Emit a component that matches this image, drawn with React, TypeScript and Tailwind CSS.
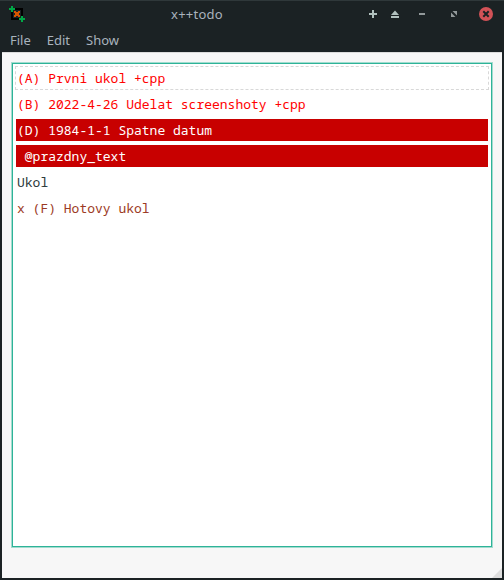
type Task = { text: string; look: string };

const tasks: Task[] = [
  { text: "(A) Prvni ukol +cpp", look: "text-[#ff0000]" },
  { text: "(B) 2022-4-26 Udelat screenshoty +cpp", look: "text-[#ff0000]" },
  { text: "(D) 1984-1-1 Spatne datum", look: "bg-[#c80000] text-white" },
  { text: " @prazdny_text", look: "bg-[#c80000] text-white" },
  { text: "Ukol", look: "text-[#2c3a3c]" },
  { text: "x (F) Hotovy ukol", look: "text-[#9c3a24]" },
];

function AppIcon() {
  return (
    <svg width="16" height="16" viewBox="0 0 16 16" shapeRendering="crispEdges">
      <path fill="#000" d="M2 2h12v12H2z" />
      <path fill="#1b2224" d="M4 4h8v8H4z" />
      <path fill="#d45500" d="M5 5h2v1h2V5h2v2h-1v2h1v2H9v-1H7v1H5V9h1V7H5z" />
      <path fill="#00a846" d="M2 0h2v2h2v2H4v2H2V4H0V2h2zM12 10h2v2h2v2h-2v2h-2v-2h-2v-2h2z" />
    </svg>
  );
}

function WindowButtons() {
  return (
    <svg width="128" height="16" viewBox="0 0 128 16">
      <path fill="#b1c1be" d="M6 4h2v3h3v2H8v3H6V9H3V7h3z" />
      <path fill="#b1c1be" d="M29 4.500l4 4.500h-8zM25 10h8v2h-8z" />
      <path fill="#92999a" d="M53 7h6v2h-6z" />
      <path fill="#92999a" d="M86.500 5H91v4.500zM85 6.500L89.500 11H85z" />
      <circle cx="120" cy="8" r="7" fill="#d25257" />
      <path stroke="#1b2224" strokeWidth="2" d="M117.300 5.300l5.400 5.400M122.700 5.300l-5.400 5.400" />
    </svg>
  );
}

export default function App() {
  return (
    <div className="flex h-[580px] w-[504px] flex-col border-t border-[#2f383a] bg-[#1b2224] px-[2px] pb-[2px] font-['Noto_Sans',sans-serif] text-[13px] text-[#a9b3bd]">
      <header className="flex h-[26px] shrink-0 items-center pl-[7px] pr-2">
        <AppIcon />
        <h1 className="flex-1 pl-[146px] text-[13px] leading-[18px] tracking-[0.25px]">x++todo</h1>
        <WindowButtons />
      </header>
      <nav className="mt-px flex h-6 shrink-0 items-center gap-4 pl-2 leading-[18px]">
        <span>File</span>
        <span>Edit</span>
        <span>Show</span>
      </nav>
      <main className="relative flex-1 border-t border-[#dcdcdc] bg-[#f7f7f7] px-[9px] pt-[9px]">
        <div className="h-[486px] border border-[#a3dccf] bg-white">
          <ul className="h-full border border-[#2eb398] px-[2px] pt-[2px] font-['Noto_Sans_Mono','DejaVu_Sans_Mono',monospace]">
            {tasks.map((task, i) => (
              <li
                key={task.text}
                className={i === 0 ? "mb-[2px] border border-dashed border-[#d8d8d8]" : "mb-[2px] border border-transparent"}
              >
                <div className={`h-[22px] whitespace-pre pl-px leading-[22px] ${task.look}`}>{task.text}</div>
              </li>
            ))}
          </ul>
        </div>
        <svg className="absolute bottom-0 right-0" width="10" height="10">
          <path fill="#dedede" d="M10 0v10H0z" />
        </svg>
      </main>
    </div>
  );
}
